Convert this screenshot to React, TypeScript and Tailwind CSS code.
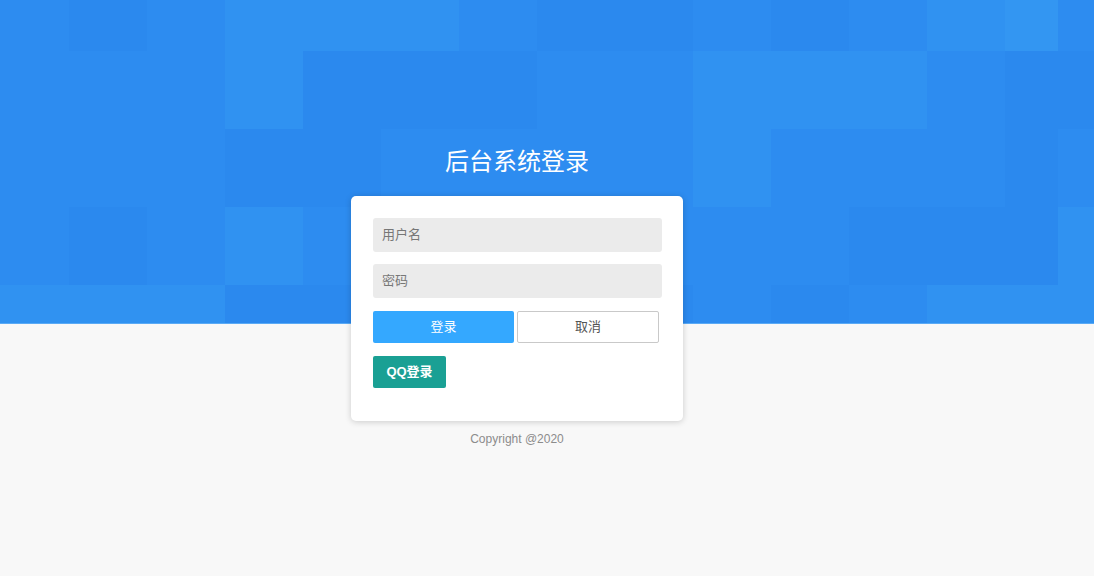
const COLS = [-9, 69, 147, 225, 303, 381, 459, 537, 615, 693, 771, 849, 927, 1005, 1058];
const ROWS = [-27, 51, 129, 207, 285];

// 0 base, 1 dark, 2 light, 3 lighter
const SHADES = ['#2d8cf0', '#2b89ee', '#3092f1', '#3396f2'];

const GRID: number[][] = [
    [0, 1, 0, 2, 2, 2, 0, 1, 1, 0, 1, 0, 2, 3, 0],
    [0, 0, 0, 2, 1, 1, 1, 0, 0, 2, 2, 2, 0, 1, 1],
    [0, 0, 0, 1, 1, 0, 0, 0, 0, 2, 0, 0, 0, 1, 0],
    [0, 1, 0, 2, 0, 0, 0, 0, 0, 0, 0, 1, 1, 1, 2],
    [2, 2, 2, 1, 1, 0, 0, 0, 1, 0, 1, 0, 2, 2, 2],
];

function Mosaic() {
    return (
        <svg className="absolute inset-0 w-full h-full" viewBox="0 0 1094 324" preserveAspectRatio="none">
            {GRID.map((row, r) =>
                row.map((s, c) => {
                    const x = COLS[c];
                    const next = c + 1 < COLS.length ? COLS[c + 1] : 1094;
                    return (
                        <rect
                            key={`${r}-${c}`}
                            x={x}
                            y={ROWS[r]}
                            width={next - x}
                            height={78}
                            fill={SHADES[s]}
                        />
                    );
                })
            )}
            <rect x={0} y={323} width={1094} height={1} fill="#5aaaf5" />
        </svg>
    );
}

export default function App() {
    return (
        <div className="relative w-full h-[576px] bg-[#f8f8f8] overflow-hidden font-['Liberation_Sans','Noto_Sans_CJK_SC',sans-serif]">
            {/* Banner */}
            <div className="absolute left-0 top-0 w-full h-[324px]">
                <Mosaic />
            </div>

            <div className="relative flex flex-col items-center pt-[145px] pr-[60px]">
                <h1 className="text-white text-[24px] leading-[34px] h-[34px] mb-[17px]">后台系统登录</h1>

                {/* Card */}
                <div className="w-[332px] bg-white rounded-[5px] shadow-[0_1px_6px_rgba(0,0,0,0.18)] pt-[22px] pb-[33px] pl-[22px] pr-[21px]">
                    <div className="h-[34px] bg-[#ebebeb] rounded-[3px] flex items-center px-[9px] text-[13px] text-[#777]">
                        用户名
                    </div>
                    <div className="h-[34px] bg-[#ebebeb] rounded-[3px] flex items-center px-[9px] text-[13px] text-[#777] mt-[12px]">
                        密码
                    </div>

                    <div className="flex gap-[3px] mt-[13px]">
                        <button className="w-[141px] h-[32px] bg-[#34a8ff] rounded-[2px] text-white text-[13px]">登录</button>
                        <button className="w-[142px] h-[32px] bg-white border border-[#c9c9c9] rounded-[2px] text-[#555] text-[13px]">
                            取消
                        </button>
                    </div>

                    <button className="mt-[13px] w-[73px] h-[32px] bg-[#1aa094] rounded-[2px] text-white text-[13px] font-bold">
                        QQ登录
                    </button>
                </div>

                <p className="mt-[9px] text-[12px] text-[#8c8c8c]">Copyright @2020</p>
            </div>
        </div>
    );
}
